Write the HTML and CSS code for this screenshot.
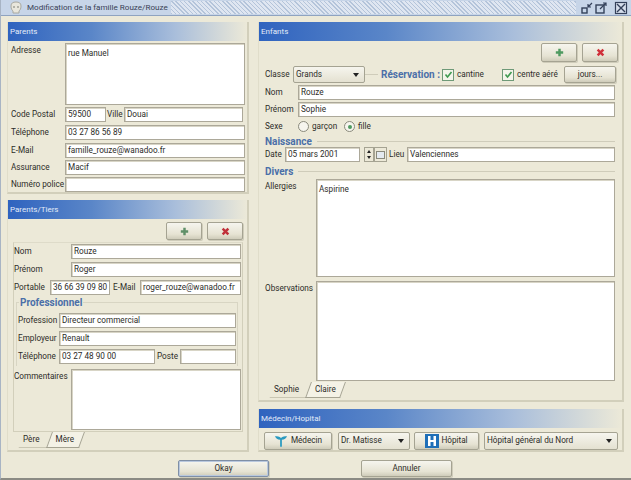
FILE: index.html
```html
<!DOCTYPE html>
<html lang="fr">
<head>
<meta charset="utf-8">
<title>Modification de la famille Rouze/Rouze</title>
<link rel="stylesheet" href="styles.css">
</head>
<body>
<div class="app">
  <div class="titlebar">
    <svg class="appicon" width="16" height="16" viewBox="0 0 16 16"><path d="M3 6c0-3 2-4 5-4s5 1 5 4-1 4-2 5v2H5v-2C4 10 3 9 3 6z" fill="#e8e6dc" stroke="#a8a8a0"/><circle cx="6" cy="7" r="1" fill="#a0a098"/><circle cx="10" cy="7" r="1" fill="#a0a098"/></svg>
    <span class="title">Modification de la famille Rouze/Rouze</span>
    <span class="hatch"></span>
    <svg class="wbtn" width="14" height="14" viewBox="0 0 14 14"><rect x="2" y="7" width="5" height="5" fill="none" stroke="#33405a" stroke-width="1.4"/><path d="M12 2L8 6M8 3v3h3" fill="none" stroke="#33405a" stroke-width="1.2"/></svg>
    <svg class="wbtn" width="14" height="14" viewBox="0 0 14 14"><rect x="2" y="4" width="8" height="8" fill="none" stroke="#33405a" stroke-width="1.4"/><path d="M6 8l6-6M9 2h3v3" fill="none" stroke="#33405a" stroke-width="1.2"/></svg>
    <svg class="wbtn last" width="14" height="14" viewBox="0 0 14 14"><rect x="1.5" y="1.5" width="11" height="11" fill="#d5deec" stroke="#33405a" stroke-width="1.2"/><path d="M3 3l8 8M11 3l-8 8" stroke="#33405a" stroke-width="1.4"/></svg>
  </div>

  <div class="main">
    <div class="col col-left">
      <section class="panel p-parents">
        <h2 class="phead">Parents</h2>
        <div class="pbody b-parents">
          <div class="row h62"><span class="lbl w54 top">Adresse</span><div class="inp area grow">rue Manuel</div></div>
          <div class="row"><span class="lbl w54">Code Postal</span><div class="inp w41">59500</div><span class="lbl ville">Ville</span><div class="inp w119">Douai</div></div>
          <div class="row"><span class="lbl w54">Téléphone</span><div class="inp grow">03 27 86 56 89</div></div>
          <div class="row"><span class="lbl w54">E-Mail</span><div class="inp grow">famille_rouze@wanadoo.fr</div></div>
          <div class="row tight"><span class="lbl w54">Assurance</span><div class="inp grow">Macif</div></div>
          <div class="row tight"><span class="lbl w54">Numéro police</span><div class="inp grow"></div></div>
        </div>
      </section>

      <section class="panel p-tiers">
        <h2 class="phead">Parents/Tiers</h2>
        <div class="tools tools-left">
          <button class="btn tool"><svg width="9" height="9" viewBox="0 0 11 11"><path d="M4 1h3v3h3v3H7v3H4V7H1V4h3z" fill="#5f8f68"/></svg></button>
          <button class="btn tool"><svg width="9" height="9" viewBox="0 0 11 11"><path d="M2 2l7 7M9 2l-7 7" stroke="#c0303a" stroke-width="3"/></svg></button>
        </div>
        <div class="pane pane-tiers">
          <div class="row first"><span class="lbl w57">Nom</span><div class="inp grow">Rouze</div></div>
          <div class="row"><span class="lbl w57">Prénom</span><div class="inp grow">Roger</div></div>
          <div class="row"><span class="lbl w36">Portable</span><div class="inp w60">36 66 39 09 80</div><span class="lbl mail">E-Mail</span><div class="inp grow">roger_rouze@wanadoo.fr</div></div>
          <fieldset class="group g-pro">
            <legend class="gtitle">Professionnel</legend>
            <div class="row first"><span class="lbl w41">Profession</span><div class="inp grow">Directeur commercial</div></div>
            <div class="row"><span class="lbl w41">Employeur</span><div class="inp grow">Renault</div></div>
            <div class="row"><span class="lbl w41">Téléphone</span><div class="inp w96">03 27 48 90 00</div><span class="lbl poste">Poste</span><div class="inp grow"></div></div>
          </fieldset>
          <div class="row comment"><span class="lbl w57 top">Commentaires</span><div class="inp area grow"></div></div>
        </div>
        <div class="tabs tabs-left"><span class="tab on"><b>Père</b></span><span class="tab"><b>Mère</b></span></div>
      </section>
    </div>

    <div class="col col-right">
      <section class="panel p-enfants">
        <h2 class="phead">Enfants</h2>
        <div class="tools tools-right">
          <button class="btn tool"><svg width="9" height="9" viewBox="0 0 11 11"><path d="M4 1h3v3h3v3H7v3H4V7H1V4h3z" fill="#4f9a60"/></svg></button>
          <button class="btn tool"><svg width="9" height="9" viewBox="0 0 11 11"><path d="M2 2l7 7M9 2l-7 7" stroke="#d0303a" stroke-width="3"/></svg></button>
        </div>
        <div class="pane-e">
          <div class="row r-classe">
            <span class="lbl w28">Classe</span>
            <div class="select w72"><span>Grands</span><i class="arrow"></i></div>
            <span class="dash"></span>
            <span class="gtitle resa">Réservation :</span>
            <span class="check"><svg width="9" height="9" viewBox="0 0 9 9"><path d="M1.5 4.5l2 2.5 4-5" fill="none" stroke="#3f9a50" stroke-width="1.6"/></svg></span>
            <span class="lbl c1">cantine</span>
            <span class="check"><svg width="9" height="9" viewBox="0 0 9 9"><path d="M1.5 4.5l2 2.5 4-5" fill="none" stroke="#3f9a50" stroke-width="1.6"/></svg></span>
            <span class="lbl c2">centre aéré</span>
            <button class="btn jours">jours...</button>
          </div>
          <div class="row r-nom"><span class="lbl w33">Nom</span><div class="inp grow">Rouze</div></div>
          <div class="row r-prenom"><span class="lbl w33">Prénom</span><div class="inp grow">Sophie</div></div>
          <div class="row r-sexe"><span class="lbl w33">Sexe</span><span class="radio"></span><span class="lbl g1">garçon</span><span class="radio sel"></span><span class="lbl">fille</span></div>
          <div class="sect s-nai"><span class="gtitle">Naissance</span><span class="line"></span></div>
          <div class="row r-date">
            <span class="lbl w20">Date</span><div class="inp w75">05 mars 2001</div>
            <div class="spin"><i class="up"></i><i class="down"></i></div>
            <div class="cal"><span></span></div>
            <span class="lbl lieu">Lieu</span><div class="inp grow">Valenciennes</div>
          </div>
          <div class="sect s-div"><span class="gtitle">Divers</span><span class="line"></span></div>
          <div class="row r-all"><span class="lbl w51 top">Allergies</span><div class="inp area grow">Aspirine</div></div>
          <div class="row r-obs"><span class="lbl w51 top">Observations</span><div class="inp area grow"></div></div>
        </div>
        <div class="tabs tabs-right"><span class="tab on"><b>Sophie</b></span><span class="tab"><b>Claire</b></span></div>
      </section>

      <section class="panel p-med">
        <h2 class="phead">Médecin/Hopital</h2>
        <div class="row r-med">
          <button class="btn b-medecin"><svg width="14" height="14" viewBox="0 0 16 15"><path d="M1 2c3 0 5 0 7 2 2-2 4-2 7-2-1 2-3 4-6 4v8H7V6C4 6 2 4 1 2z" fill="#2a9ac0"/></svg><span>Médecin</span></button>
          <div class="select s-doc"><span>Dr. Matisse</span><i class="arrow"></i></div>
          <button class="btn b-hopital"><svg width="14" height="14" viewBox="0 0 14 14"><rect width="14" height="14" fill="#1f6fb8"/><path d="M3 2h2.500v4h3V2H11v10H8.500V8h-3v4H3z" fill="#fff"/></svg><span>Hôpital</span></button>
          <div class="select s-hop"><span>Hôpital général du Nord</span><i class="arrow"></i></div>
        </div>
      </section>
    </div>
  </div>

  <div class="footer">
    <button class="btn fbtn okay">Okay</button>
    <button class="btn fbtn">Annuler</button>
  </div>
</div>
</body>
</html>
```
FILE: styles.css
```css
* { box-sizing: border-box; }
html, body { margin: 0; padding: 0; }
body { width: 631px; height: 480px; overflow: hidden; background: #ece9d8; font: 8.200px/1 Roboto, "Liberation Sans", sans-serif; color: #2c2c28; }
.app { width: 631px; height: 480px; display: flex; flex-direction: column; border-bottom: 2px solid #8b8b84; border-left: 1px solid #a8b4c4; }

.titlebar { height: 16px; flex: none; display: flex; align-items: center; background: #c7d5e8; border-bottom: 1px solid #8fa3c0; padding-left: 7px; }
.appicon { flex: none; margin-right: 3px; }
.title { white-space: nowrap; color: #3a4256; font-size: 8.100px; }
.hatch { flex: 1; height: 13px; margin: 0 4px 0 3px; background: repeating-linear-gradient(45deg, #b4c4da 0 1px, #dfe6f1 1px 3px); }
.wbtn { flex: none; }
.wbtn.last { margin: 0 3px 0 6px; }

.main { flex: none; height: 436px; display: flex; gap: 9px; padding: 6px 0 0 6px; }
.col { display: flex; flex-direction: column; gap: 6px; }
.col-left { width: 242px; }
.col-right { width: 366px; gap: 7px; }
.panel { border-right: 2px solid #d2cfbb; border-bottom: 2px solid #d2cfbb; border-left: 1px solid #e0ddca; background: #ece9d8; }
.p-parents { height: 172px; }
.p-tiers { height: 252px; }
.p-enfants { height: 380px; }
.p-med { height: 43px; }
.phead { margin: 0; height: 19px; padding: 0 0 0 2px; font-weight: 400; font-size: 8px; line-height: 19px; color: #e4ecf8; background: linear-gradient(90deg, #2f63bf 0%, #5a86c8 35%, #a9bedb 70%, #ece9d8 100%); }

.row { display: flex; align-items: center; height: 15px; margin-top: 3px; }
.lbl { flex: none; white-space: nowrap; }
.top { align-self: flex-start; padding-top: 3px; }
.inp { flex: none; height: 100%; background: #fff; border: 1px solid #aca899; box-shadow: inset 1px 1px 0 #d8d5c6; padding: 0 2px; line-height: 13px; white-space: nowrap; overflow: hidden; display: flex; align-items: center; }
.grow { flex: 1; min-width: 0; }
.area { align-items: flex-start; padding-top: 3px; }

.b-parents { padding: 2px 2px 0 3px; }
.h62 { height: 62px; align-items: stretch; }
.b-parents .row { margin-top: 3px; }
.b-parents .row.h62 { margin-top: 0; }
.b-parents .row:nth-child(2) { margin-top: 2px; }
.b-parents .row.tight { margin-top: 2px; }
.w54 { width: 54px; }
.w57 { width: 57px; }
.w36 { width: 36px; }
.w41 { width: 41px; }
.w28 { width: 28px; }
.w33 { width: 33px; }
.w20 { width: 20px; }
.w51 { width: 51px; }
.w119 { width: 119px; }
.w60 { width: 60px; }
.w96 { width: 96px; }
.w72 { width: 72px; }
.w75 { width: 75px; }
.ville { width: 18px; padding-left: 1px; }
.mail { width: 30px; padding-left: 3px; }
.poste { width: 25px; padding-left: 2px; }

.tools { display: flex; justify-content: flex-end; gap: 5px; }
.btn { margin: 0; padding: 0; font: inherit; color: inherit; border: 1px solid #a5a392; border-radius: 2px; background: linear-gradient(#f6f5ee, #e6e3d3 70%, #cfccba); box-shadow: 1px 1px 0 #cfccba; display: flex; align-items: center; justify-content: center; }
.tool { width: 36px; height: 18px; }
.tools-left { padding: 3px 4px 0 0; }
.tools-right { padding: 2px 4px 0 0; height: 21px; }
.tools-right .tool { height: 19px; }

.pane-tiers { margin: 2px 4px 0 5px; height: 190px; padding: 1px 1px 0 0; border: 1px solid #d2cfbb; border-top: 1px solid #dedbc9; }
.pane-tiers > .row.first { margin-top: 0; }
.group { margin: 3px 3px 0 2px; padding: 0 1px 0 1px; border: 1px solid #d8d5c3; border-bottom: 0; height: 68px; min-width: 0; }
.gtitle { font-weight: 700; font-size: 10px; color: #4a6fa8; white-space: nowrap; }
.g-pro legend { padding: 0 1px; margin-left: 1px; line-height: 9px; }
.group .row { margin-top: 3px; }
.group .row.first { margin-top: 6px; }
.comment { height: 61px; margin-top: 3px; align-items: stretch; }

.tabs { display: flex; align-items: stretch; height: 16px; }
.tab { position: relative; padding: 0 7px; line-height: 15px; display: block; }
.tab b { position: relative; font-weight: 400; }
.tab::before { content: ""; position: absolute; inset: 0; }
.tab.on::before { border-bottom: 1px solid #c9c6b3; transform: skewX(20deg); }
.tab:not(.on)::before { background: #f4f2e6; border: 1px solid #a5a392; border-top: 0; transform: skewX(-20deg); }
.tab:not(.on) { margin-left: 2px; }
.tabs-left { margin-left: 8px; }
.tabs-right { margin-left: 8px; }

.pane-e { padding: 4px 7px 0 6px; height: 320px; }
.r-classe { height: 17px; margin-top: 0; }
.r-nom { margin-top: 2px; }
.r-prenom { margin-top: 2px; }
.r-sexe { height: 13px; margin-top: 3px; }
.select { flex: none; height: 17px; display: flex; align-items: center; justify-content: space-between; padding: 0 5px 0 2px; border: 1px solid #a5a392; border-radius: 2px; background: linear-gradient(#f6f5ee, #e4e1d1); white-space: nowrap; }
.arrow { width: 0; height: 0; border-left: 3.500px solid transparent; border-right: 3.500px solid transparent; border-top: 4px solid #222; }
.dash { flex: none; width: 13px; height: 1px; background: #cfccba; margin: 0 3px 0 0; }
.resa { margin-right: 3px; width: 58px; }
.check { flex: none; width: 12px; height: 12px; background: #f4f4ea; border: 1px solid #6f9a78; display: flex; align-items: center; justify-content: center; margin-right: 3px; }
.c1 { width: 45px; }
.c2 { width: 47px; }
.jours { width: 52px; height: 17px; flex: none; }
.radio { flex: none; width: 11px; height: 11px; border: 1px solid #8a8a7c; border-radius: 50%; background: #f6f5ee; margin-right: 3px; display: flex; align-items: center; justify-content: center; }
.radio.sel::before { content: ""; width: 4px; height: 4px; border-radius: 50%; background: #4f9a60; }
.g1 { width: 32px; }
.sect { display: flex; align-items: center; height: 11px; gap: 5px; }
.s-nai { margin-top: 3px; }
.s-div { margin-top: 4px; }
.sect .line { flex: 1; height: 1px; background: #cfccba; }
.r-date { margin-top: 0; }
.spin { flex: none; width: 10px; height: 15px; margin-left: 4px; border: 1px solid #a5a392; background: #ece9d8; display: flex; flex-direction: column; align-items: center; justify-content: space-around; }
.spin i { width: 0; height: 0; border-left: 2.500px solid transparent; border-right: 2.500px solid transparent; }
.spin .up { border-bottom: 3px solid #222; }
.spin .down { border-top: 3px solid #222; }
.cal { flex: none; width: 13px; height: 15px; border: 1px solid #a5a392; background: #ece9d8; display: flex; align-items: center; justify-content: center; }
.cal span { width: 9px; height: 8px; border: 1px solid #8a8a7c; background: #e4eaf0; }
.lieu { width: 20px; padding-left: 2px; }
.r-all { height: 98px; margin-top: 2px; align-items: stretch; }
.r-obs { height: 100px; margin-top: 4px; align-items: stretch; }

.r-med { height: 19px; margin-top: 3px; padding-left: 5px; }
.b-medecin { width: 68px; height: 18px; gap: 3px; flex: none; }
.s-doc { width: 72px; height: 18px; margin-left: 6px; }
.b-hopital { width: 65px; height: 18px; gap: 2px; flex: none; margin-left: 4px; }
.s-hop { width: 134px; height: 18px; margin-left: 5px; }

.footer { flex: 1; display: flex; gap: 92px; padding: 8px 0 0 177px; }
.fbtn { width: 91px; height: 17px; flex: none; }
.okay { border: 1px solid #7f8fa6; box-shadow: inset 0 0 0 1px #b9c8de, 1px 1px 0 #cfccba; }
```
